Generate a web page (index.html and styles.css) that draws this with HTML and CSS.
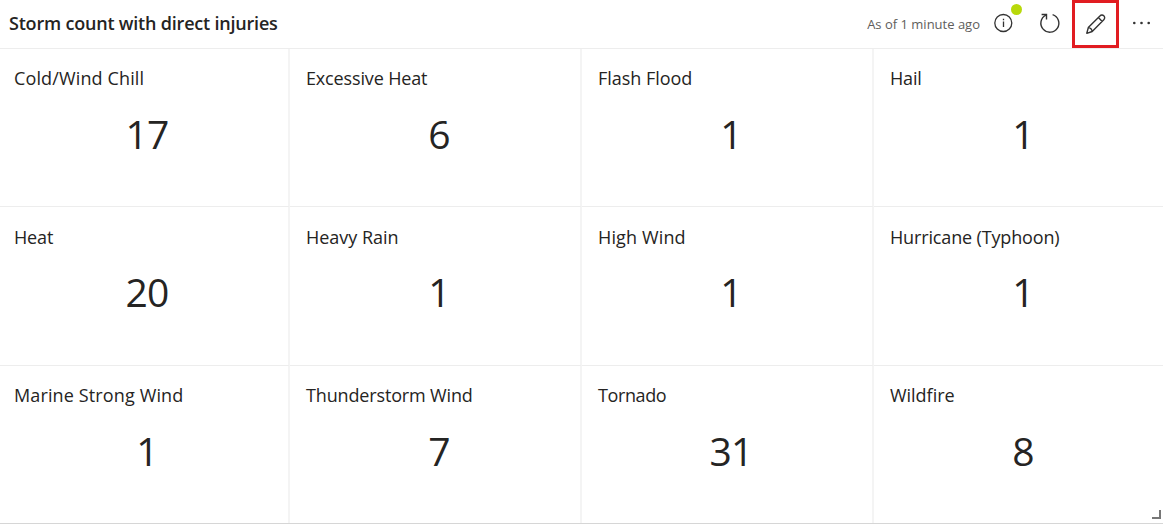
FILE: index.html
```
<!DOCTYPE html>
<html lang="en">
<head>
<meta charset="utf-8">
<title>Storm count with direct injuries</title>
<link rel="stylesheet" href="styles.css">
</head>
<body>
<main class="tile">
  <header class="header">
    <h1 class="title">Storm count with direct injuries</h1>
    <span class="age">As of 1 minute ago</span>
    <div class="info">
      <svg width="20" height="20" viewBox="0 0 20 20"><circle cx="10.3" cy="10" r="8.5" fill="none" stroke="#333" stroke-width="1.3"/><path d="M10.5 8.6V14M10.5 5.7V7.2" stroke="#333" stroke-width="1.3" fill="none"/></svg>
      <span class="dot"></span>
    </div>
    <svg class="refresh" width="22" height="22" viewBox="0 0 22 22"><path d="M13.6 2.6A9 9 0 1 1 6.9 3.1" fill="none" stroke="#333" stroke-width="1.4"/><path d="M2.6 2.5H7.5V7.4" fill="none" stroke="#333" stroke-width="1.4"/></svg>
    <div class="edit">
      <svg width="22" height="22" viewBox="0 0 22 22"><path d="M1.8 20.3L3.3 14.6L14.9 3C16 1.8 17.7 1.7 18.8 2.8C20 4 19.9 5.7 18.8 6.8L7.2 18.5ZM13.4 4.6L17.2 8.4M3.3 14.6C5.3 14.8 6.9 16.4 7.2 18.5" fill="none" stroke="#333" stroke-width="1.4" stroke-linejoin="round"/></svg>
    </div>
    <svg class="more" width="20" height="4" viewBox="0 0 20 4"><g fill="#333"><circle cx="2.3" cy="2" r="1.3"/><circle cx="9.5" cy="2" r="1.3"/><circle cx="16.7" cy="2" r="1.3"/></g></svg>
  </header>
  <section class="grid">
    <div class="cell"><div class="label wide">Cold/Wind Chill</div><div class="value">17</div></div>
    <div class="cell"><div class="label">Excessive Heat</div><div class="value">6</div></div>
    <div class="cell"><div class="label loose">Flash Flood</div><div class="value">1</div></div>
    <div class="cell"><div class="label">Hail</div><div class="value">1</div></div>
    <div class="cell"><div class="label">Heat</div><div class="value">20</div></div>
    <div class="cell"><div class="label loose">Heavy Rain</div><div class="value">1</div></div>
    <div class="cell"><div class="label wide">High Wind</div><div class="value">1</div></div>
    <div class="cell"><div class="label">Hurricane (Typhoon)</div><div class="value">1</div></div>
    <div class="cell"><div class="label wide">Marine Strong Wind</div><div class="value">1</div></div>
    <div class="cell"><div class="label">Thunderstorm Wind</div><div class="value">7</div></div>
    <div class="cell"><div class="label tight">Tornado</div><div class="value">31</div></div>
    <div class="cell"><div class="label loose">Wildfire</div><div class="value">8</div></div>
  </section>
  <span class="resize"></span>
</main>
</body>
</html>
```
FILE: styles.css
```
* { box-sizing: border-box; }
body {
  margin: 0;
  background: #fff;
  color: #252423;
  font-family: "Open Sans", "Noto Sans", sans-serif;
}
.tile {
  position: relative;
  width: 1163px;
  height: 524px;
  overflow: hidden;
  border-bottom: 1px solid #d6d6d6;
}
.header {
  display: flex;
  align-items: center;
  height: 49px;
  padding: 0 11px 1px 9px;
  border-bottom: 1px solid #ededed;
}
.title {
  margin: 0 auto 2px 0;
  font-size: 18px;
  font-weight: 600;
  line-height: 24px;
  letter-spacing: -0.2px;
  white-space: nowrap;
}
.age {
  margin-right: 13px;
  color: #605e5c;
  font-size: 13px;
  line-height: 18px;
  white-space: nowrap;
}
.info {
  position: relative;
  height: 20px;
  margin: 0 26px 2px 0;
}
.info svg, .edit svg { display: block; }
.dot {
  position: absolute;
  left: 18px;
  top: -9px;
  width: 11px;
  height: 11px;
  border-radius: 50%;
  background: #b8d90b;
}
.refresh { margin: 0 11px 2px 0; }
.edit {
  display: flex;
  align-items: center;
  justify-content: center;
  width: 47px;
  height: 48px;
  border: 3px solid #e11c21;
}
.more { margin: 0 0 1px 13px; }
.grid {
  display: grid;
  grid-template-columns: 290px 292px 292px 289px;
  grid-template-rows: 158px 159px 157px;
}
.cell {
  border-right: 2px solid #f4f4f4;
  border-bottom: 1px solid #ededed;
  padding: 17px 7px 0 15px;
}
.cell:nth-child(4n+1) { padding-left: 13px; }
.cell:nth-child(4n) { padding-right: 6px; border-right: 0; }
.cell:nth-child(n+9) { border-bottom: 0; }
.label {
  margin-left: 1px;
  font-size: 18px;
  line-height: 25px;
  letter-spacing: -0.15px;
  white-space: nowrap;
}
.loose { letter-spacing: -0.03px; }
.wide { letter-spacing: 0.13px; }
.tight { letter-spacing: -0.4px; }
.value {
  margin-top: 16px;
  font-size: 39px;
  line-height: 54px;
  letter-spacing: -0.7px;
  text-align: center;
}
.cell:nth-child(n+5):nth-child(-n+8) { padding-top: 18px; }
.cell:nth-child(n+5):nth-child(-n+8) .value { margin-top: 15px; }
.resize {
  position: absolute;
  right: 2px;
  bottom: 4px;
  width: 9px;
  height: 9px;
  border: solid #777;
  border-width: 0 2px 2px 0;
}
```
